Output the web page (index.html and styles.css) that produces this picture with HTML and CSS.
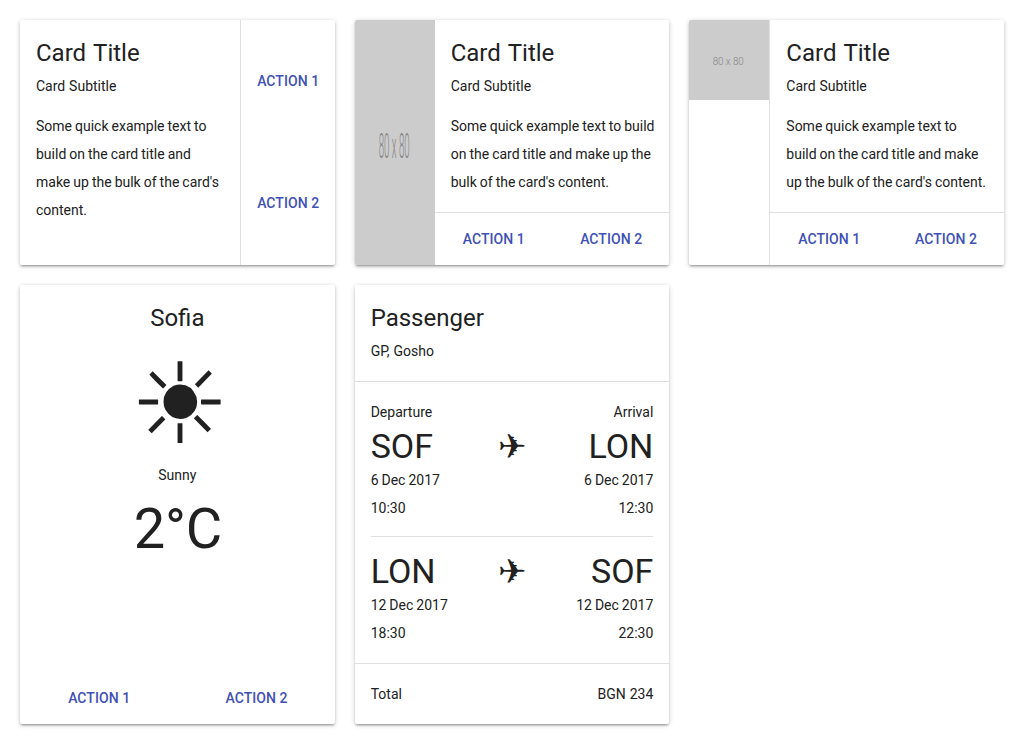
FILE: index.html
```html
<!DOCTYPE html>
<html lang="en">
<head>
<meta charset="utf-8">
<title>Cards</title>
<link rel="stylesheet" href="styles.css">
</head>
<body>
<main class="cards">
  <article class="card card--row">
    <div class="card__body">
      <h2 class="card__title">Card Title</h2>
      <p class="card__subtitle">Card Subtitle</p>
      <p class="card__text">Some quick example text to<br>build on the card title and<br>make up the bulk of the card's<br>content.</p>
    </div>
    <div class="actions actions--vertical"><button class="btn">ACTION 1</button><button class="btn">ACTION 2</button></div>
  </article>

  <article class="card card--row">
    <svg class="media media--stretch" viewBox="0 0 80 80" preserveAspectRatio="none"><rect width="80" height="80" fill="#ccc"/><text class="media__label" x="39.2" y="45" text-anchor="middle" textLength="31" lengthAdjust="spacingAndGlyphs">80 x 80</text></svg>
    <div class="card__column">
      <div class="card__body">
        <h2 class="card__title">Card Title</h2>
        <p class="card__subtitle">Card Subtitle</p>
        <p class="card__text">Some quick example text to build<br>on the card title and make up the<br>bulk of the card's content.</p>
      </div>
      <div class="actions actions--ruled"><button class="btn">ACTION 1</button><button class="btn">ACTION 2</button></div>
    </div>
  </article>

  <article class="card card--row">
    <svg class="media" viewBox="0 0 80 80"><rect width="80" height="80" fill="#ccc"/><text class="media__label" x="39.2" y="45" text-anchor="middle" textLength="31" lengthAdjust="spacingAndGlyphs">80 x 80</text></svg>
    <div class="card__column card__column--ruled">
      <div class="card__body">
        <h2 class="card__title">Card Title</h2>
        <p class="card__subtitle">Card Subtitle</p>
        <p class="card__text">Some quick example text to<br>build on the card title and make<br>up the bulk of the card's content.</p>
      </div>
      <div class="actions actions--ruled"><button class="btn">ACTION 1</button><button class="btn">ACTION 2</button></div>
    </div>
  </article>

  <article class="card weather">
    <div class="card__body weather__body">
      <h2 class="card__title">Sofia</h2>
      <div class="weather__icon">☀</div>
      <p class="weather__state">Sunny</p>
      <div class="weather__temp">2°C</div>
    </div>
    <div class="actions"><button class="btn">ACTION 1</button><button class="btn">ACTION 2</button></div>
  </article>

  <article class="card ticket">
    <header class="card__body ticket__head">
      <h2 class="card__title">Passenger</h2>
      <p class="card__subtitle">GP, Gosho</p>
    </header>
    <div class="ticket__flights">
      <section class="flight">
        <div><p>Departure</p><h3 class="flight__code">SOF</h3><p>6 Dec 2017</p><p>10:30</p></div>
        <span class="flight__plane flight__plane--labelled">✈</span>
        <div class="flight__end"><p>Arrival</p><h3 class="flight__code">LON</h3><p>6 Dec 2017</p><p>12:30</p></div>
      </section>
      <hr class="rule">
      <section class="flight">
        <div><h3 class="flight__code">LON</h3><p>12 Dec 2017</p><p>18:30</p></div>
        <span class="flight__plane">✈</span>
        <div class="flight__end"><h3 class="flight__code">SOF</h3><p>12 Dec 2017</p><p>22:30</p></div>
      </section>
    </div>
    <footer class="ticket__total"><span>Total</span><span>BGN 234</span></footer>
  </article>
</main>
</body>
</html>
```
FILE: styles.css
```css
* { box-sizing: border-box; }
body { margin: 0; background: #fff; color: #212121; font: 14px/28px Roboto, sans-serif; }
h2, h3, p { margin: 0; font-weight: 400; }
.cards { display: grid; grid-template-columns: repeat(3, 314.66px); grid-template-rows: 245px 439px; gap: 20px; padding: 20px; }
.card { display: flex; flex-direction: column; background: #fff; border-radius: 2px; overflow: hidden; box-shadow: 0 1px 5px rgba(0,0,0,.2), 0 2px 2px rgba(0,0,0,.14), 0 3px 1px -2px rgba(0,0,0,.12); }
.card--row { flex-direction: row; }
.card__body { flex: 1; padding: 17px 16px 16px; min-width: 0; }
.card__title { font-size: 24px; line-height: 32px; margin-bottom: 3px; word-spacing: 1.5px; }
.card__subtitle { margin-bottom: 12px; word-spacing: .4px; }
.card__text { word-spacing: -.45px; white-space: nowrap; }
.card__column { flex: 1; min-width: 0; display: flex; flex-direction: column; }
.card__column--ruled { border-left: 1px solid #e0e0e0; }
.actions { display: flex; justify-content: space-around; align-items: center; height: 52px; flex: none; }
.actions--ruled { height: 53px; border-top: 1px solid #e0e0e0; }
.actions--vertical { flex-direction: column; width: 95px; height: auto; padding-bottom: 1px; border-left: 1px solid #e0e0e0; }
.btn { height: 36px; padding: 0 7.5px 0 8.5px; border: 0; background: none; color: #3f51b5; font: 500 14px/36px Roboto, sans-serif; letter-spacing: .05px; }
.media { width: 80px; height: 80px; flex: none; display: block; }
.media--stretch { height: 245px; }
.media__label { font: 300 11.5px Roboto, sans-serif; fill: #858585; }
.weather__body { text-align: center; }
.weather__icon { font: 112px/128px "DejaVu Sans", sans-serif; margin-top: 6px; padding-left: 5px; height: 121px; }
.weather__temp { font-size: 56px; line-height: 80px; letter-spacing: -.3px; padding-left: 1px; }
.ticket__head { flex: none; height: 97px; border-bottom: 1px solid #e0e0e0; }
.ticket__flights { flex: 1; padding: 16px; word-spacing: -.5px; }
.flight { display: flex; justify-content: space-between; align-items: flex-start; }
.flight > div { width: 120px; }
.flight .flight__end { text-align: right; }
.flight__code { font-size: 34px; line-height: 40px; }
.flight__plane { font: 34px/40px "DejaVu Sans", sans-serif; }
.flight__plane--labelled { margin-top: 28px; }
.rule { border: 0; border-top: 1px solid #e0e0e0; margin: 14px 0; }
.ticket__total { display: flex; justify-content: space-between; align-items: center; height: 61px; padding: 0 16px; border-top: 1px solid #e0e0e0; word-spacing: .5px; }
```
